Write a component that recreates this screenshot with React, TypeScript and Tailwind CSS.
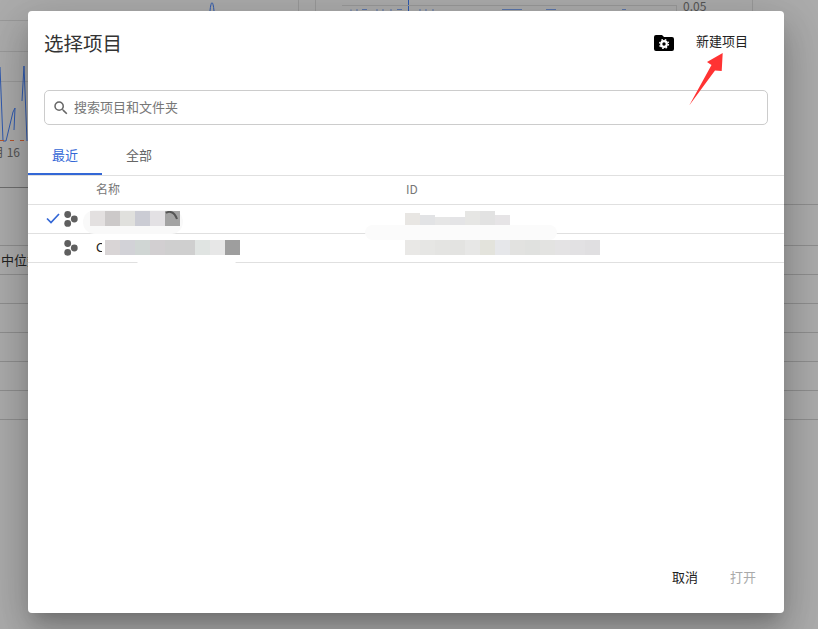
const cjk = { fontFamily: '"Noto Sans CJK SC", "Liberation Sans", sans-serif' };

const row1Name = ['bg-[#e3e0e0]', 'bg-[#ccc9c9]', 'bg-[#e0e0dd]', 'bg-[#cbccd4]', 'bg-[#e3e1e4]', 'bg-[#a3a3a3]'];
const row2Name = ['bg-[#d9d5d6]', 'bg-[#d2d2d7]', 'bg-[#d0d6d4]', 'bg-[#d2cfd1]', 'bg-[#cfcfcf]', 'bg-[#cfcfcf]', 'bg-[#e0e4e2]', 'bg-[#e7e7e7]', 'bg-[#9e9e9e]'];
const row1Id = ['h-[13px] bg-[#e8e6e3]', 'h-[11px] bg-[#e2e3e5]', 'h-[9px] bg-[#e6e6e6]', 'h-[9px] bg-[#e4e4e6]', 'h-[15px] bg-[#e6e6e4]', 'h-[15px] bg-[#e2e2e2]', 'h-[11px] bg-[#e6e4e6]'];
const row2Id = ['bg-[#e9e8e6]', 'bg-[#e6e6e4]', 'bg-[#e4e4e2]', 'bg-[#e3e3e1]', 'bg-[#e7e7e6]', 'bg-[#e3e3dc]', 'bg-[#e6e7ea]', 'bg-[#e2e2e0]', 'bg-[#e0e1df]', 'bg-[#e3e3e1]', 'bg-[#e4e3e4]', 'bg-[#e2e1e3]', 'bg-[#e0dfe1]'];

function ProjectIcon() {
  return (
    <svg width="14" height="16" viewBox="0 0 14 16" className="shrink-0 relative">
      <circle cx="3.7" cy="3.5" r="3.4" fill="#5f5f5f" />
      <circle cx="3.7" cy="12.4" r="3.4" fill="#5f5f5f" />
      <circle cx="10.3" cy="8" r="3.4" fill="#5f5f5f" />
    </svg>
  );
}

function Blocks({ colors, h }: { colors: string[]; h: string }) {
  return (
    <div className="relative flex items-end">
      {colors.map((c, i) => (
        <div key={i} className={`w-[15px] ${h} ${c}`} />
      ))}
    </div>
  );
}

export default function App() {
  return (
    <div className="relative w-[818px] h-[629px] overflow-hidden bg-[#acacac]" style={cjk}>
      {/* page behind the dialog */}
      <div className="flex flex-col">
        <div className="flex h-[246px] border-b border-[#8f8f8f]">
          <div className="w-[409px] flex flex-col">
            <div className="h-[21px] border-b border-[#9a9a9a]" />
            <div className="h-[31px] border-b border-[#9a9a9a]" />
            <div className="h-[30px] border-b border-[#9a9a9a]" />
            <div className="h-[106px] border-b border-[#6f6f6f]" />
          </div>
          <div className="flex-1">
            <div className="h-[205px] border-b border-[#8f8f8f]" />
          </div>
        </div>
        <div className="h-[29px] border-b border-[#8f8f8f]" />
        <div className="h-[29px] border-b border-[#8f8f8f]" />
        <div className="h-[29px] border-b border-[#8f8f8f]" />
        <div className="h-[29px] border-b border-[#8f8f8f]" />
        <div className="h-[29px] border-b border-[#8f8f8f]" />
        <div className="h-[29px] border-b border-[#8f8f8f]" />
      </div>
      <svg width="818" height="160" viewBox="0 0 818 160" className="absolute left-0 top-0">
        <polyline points="0,67 3,141 6,141 13,112 15,108 14,130" fill="none" stroke="#2f5ab0" strokeWidth="1" />
        <polyline points="22,101 24,66 27,141" fill="none" stroke="#2f5ab0" strokeWidth="1" />
        <path d="M0 140.5H28" stroke="#b5552e" strokeWidth="1" strokeDasharray="4 6" />
        <path d="M210 11C211 0 213 0 214 11" fill="none" stroke="#2f5ab0" strokeWidth="1" />
        <path d="M408.5 0V11" stroke="#2f5ab0" strokeWidth="1" />
        <path d="M342 5.5H676" stroke="#9a9a9a" strokeWidth="1" />
        <path d="M298.5 0V11M315.5 0V11M676.5 5V11M752.5 0V11" stroke="#9a9a9a" strokeWidth="1" />
        <path d="M351 9.5V11M357 9V11M362 9.5H367M377 9V11M383 9V11M391 9V11M397 9.5H402M420 9V11M426 9V11M433 9V11M502 9.5H522M546 9.5H556M622 9.5H626" stroke="#5a76ad" strokeWidth="1" />
      </svg>
      <div className="absolute left-[-8px] top-[144px] text-[12px] leading-[16px] text-[#555] whitespace-nowrap">月 16</div>
      <div className="absolute left-[-12px] top-[252px] text-[13px] leading-[16px] text-[#222] whitespace-nowrap">月中位数</div>
      <div className="absolute left-[683px] top-0 text-[12px] leading-[12px] text-[#555]">0.05</div>

      {/* dialog */}
      <div className="absolute left-[28px] top-[11px] w-[756px] h-[602px] bg-white rounded-[4px] flex flex-col shadow-[0_11px_15px_-7px_rgba(0,0,0,0.2),0_24px_38px_3px_rgba(0,0,0,0.14),0_9px_46px_8px_rgba(0,0,0,0.12)]">
        <div className="flex items-center h-[64px] pl-4 pr-9">
          <h1 className="text-[19.5px] leading-[28px] text-[#333] font-normal mt-[-1px]">选择项目</h1>
          <svg width="20" height="16" viewBox="0 0 20 16" className="ml-auto mt-[-1px]">
            <path d="M2 0h6l2 2h8a2 2 0 0 1 2 2v10a2 2 0 0 1-2 2H2a2 2 0 0 1-2-2V2a2 2 0 0 1 2-2z" fill="#000" />
            <circle cx="10" cy="9" r="2.8" fill="none" stroke="#fff" strokeWidth="2.2" />
            <circle cx="10" cy="9" r="4.4" fill="none" stroke="#fff" strokeWidth="1.4" strokeDasharray="1.6 1.9" />
          </svg>
          <span className="ml-[22px] text-[13px] leading-[20px] text-[#222] mt-[-4px]">新建项目</span>
        </div>

        <div className="px-4 mt-[15px]">
          <div className="flex items-center h-[35px] border border-[#cccccc] rounded-[5px] pl-[7px]">
            <svg width="18" height="18" viewBox="0 0 24 24" fill="#666">
              <path d="M15.5 14h-.79l-.28-.27A6.471 6.471 0 0 0 16 9.5 6.5 6.5 0 1 0 9.5 16c1.61 0 3.09-.59 4.23-1.57l.27.28v.79l5 4.99L20.49 19l-4.99-5zm-6 0C7.01 14 5 11.99 5 9.5S7.01 5 9.5 5 14 7.01 14 9.5 11.99 14 9.5 14z" />
            </svg>
            <span className="ml-[4px] mb-[2px] text-[13px] text-[#777]">搜索项目和文件夹</span>
          </div>
        </div>

        <div className="flex h-[51px] pt-[16px] border-b border-[#e0e0e0]">
          <div className="w-[74px] h-[34px] flex justify-center pt-[4px] border-b-2 border-[#3367d6] text-[13px] leading-[20px] text-[#3367d6]">最近</div>
          <div className="w-[74px] flex justify-center pt-[4px] text-[13px] leading-[20px] text-[#666]">全部</div>
        </div>

        <div className="flex items-center h-[29px] pb-[2px] border-b border-[#e0e0e0] text-[12px] text-[#777]">
          <div className="w-[378px] pl-[68px]">名称</div>
          <div>ID</div>
        </div>

        <div className="relative flex items-center h-[29px] border-b border-[#e0e0e0]">
          {/* soft smudge behind the hidden name */}
          <div className="absolute left-[55px] top-[5px] w-[100px] h-[24px] bg-[#f9f9f9] rounded-full" />
          <svg width="14" height="11" viewBox="0 0 14 11" className="relative ml-[18px] mr-[4px] mt-[-1px]">
            <path d="M1 5.5 L5 9.5 L13 1" fill="none" stroke="#3367d6" strokeWidth="1.7" />
          </svg>
          <ProjectIcon />
          <div className="relative ml-[12px] w-[315px] flex mt-[-1px]">
            <Blocks colors={row1Name} h="h-[15px]" />
            <svg width="13" height="9" viewBox="0 0 13 9" className="absolute left-[75px] top-0">
              <path d="M1 2C4 0 9 0 12 8" fill="none" stroke="#555" strokeWidth="2" />
            </svg>
          </div>
          <div className="mt-[-1px]">
            <Blocks colors={row1Id} h="" />
          </div>
        </div>

        <div className="relative flex items-center h-[29px] border-b border-[#e0e0e0]">
          <div className="absolute left-[105px] top-[21px] w-[107px] h-[9px] bg-white rounded-b-full" />
          <div className="ml-[36px]">
            <ProjectIcon />
          </div>
          <div className="ml-[18px] w-[309px] flex items-center mt-[-1px]">
            <span className="w-[9px] text-[13px]" style={{ fontFamily: '"Liberation Sans", sans-serif' }}>
              <span className="block w-[6px] overflow-hidden text-[#222]">C</span>
            </span>
            <Blocks colors={row2Name} h="h-[15px]" />
          </div>
          <div className="mt-[-1px]">
            <Blocks colors={row2Id} h="h-[15px]" />
          </div>
        </div>
        {/* smudge over the row line */}
        <div className="absolute left-[337px] top-[214px] w-[192px] h-[15px] bg-[#fbfbfb] rounded-full" />

        <div className="flex justify-end gap-8 mt-auto pr-7 pb-[26px] text-[13px] leading-[20px]">
          <span className="text-[#222]">取消</span>
          <span className="text-[#aaa]">打开</span>
        </div>
      </div>

      {/* annotation arrow */}
      <svg width="818" height="629" viewBox="0 0 818 629" className="absolute left-0 top-0 pointer-events-none">
        <polygon points="722.7,53 707,62 711.5,65 689.2,105.5 715,70.5 721.7,71" fill="#ff3333" />
      </svg>
    </div>
  );
}
